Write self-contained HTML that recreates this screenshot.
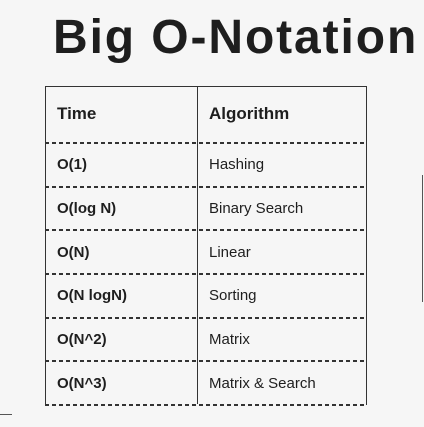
<!DOCTYPE html>
<html><head><style>
body{margin:0;width:424px;height:427px;background:#f6f6f6;position:relative;overflow:hidden;font-family:"Liberation Sans",sans-serif;color:#1e1e1e}
h1{position:absolute;left:53px;top:10px;margin:0;font-size:48px;font-weight:bold;letter-spacing:1.9px;white-space:nowrap}
.tbl{position:absolute;left:45px;top:86px;width:320px;height:318px;border:1px solid #333;border-bottom:none}
.mid{position:absolute;left:197px;top:86px;width:1px;height:318px;background:#333}
.d{position:absolute;left:45px;width:321px;height:1.5px;background:repeating-linear-gradient(90deg,#333 0 4px,transparent 4px 7px)}
.t{position:absolute;font-size:15px;white-space:nowrap}
.b{font-weight:bold;left:57px}
.a{left:209px}
</style></head><body>
<h1>Big O-Notation</h1>
<div class="tbl"></div><div class="mid"></div>
<div class="d" style="top:142px"></div>
<div class="d" style="top:186px"></div>
<div class="d" style="top:229px"></div>
<div class="d" style="top:273px"></div>
<div class="d" style="top:317px"></div>
<div class="d" style="top:360px"></div>
<div class="d" style="top:404px"></div>
<div class="t b" style="top:104px;font-size:17px">Time</div>
<div class="t a" style="top:104px;font-size:17px;font-weight:bold">Algorithm</div>
<div class="t b" style="top:156px">O(1)</div><div class="t a" style="top:156px">Hashing</div>
<div class="t b" style="top:200px">O(log N)</div><div class="t a" style="top:200px">Binary Search</div>
<div class="t b" style="top:244px">O(N)</div><div class="t a" style="top:244px">Linear</div>
<div class="t b" style="top:287px">O(N logN)</div><div class="t a" style="top:287px">Sorting</div>
<div class="t b" style="top:331px">O(N^2)</div><div class="t a" style="top:331px">Matrix</div>
<div class="t b" style="top:375px">O(N^3)</div><div class="t a" style="top:375px">Matrix &amp; Search</div>
<div style="position:absolute;left:422px;top:175px;width:1px;height:127px;background:#555"></div>
<div style="position:absolute;left:0;top:414px;width:12px;height:1px;background:#555"></div>
</body></html>
